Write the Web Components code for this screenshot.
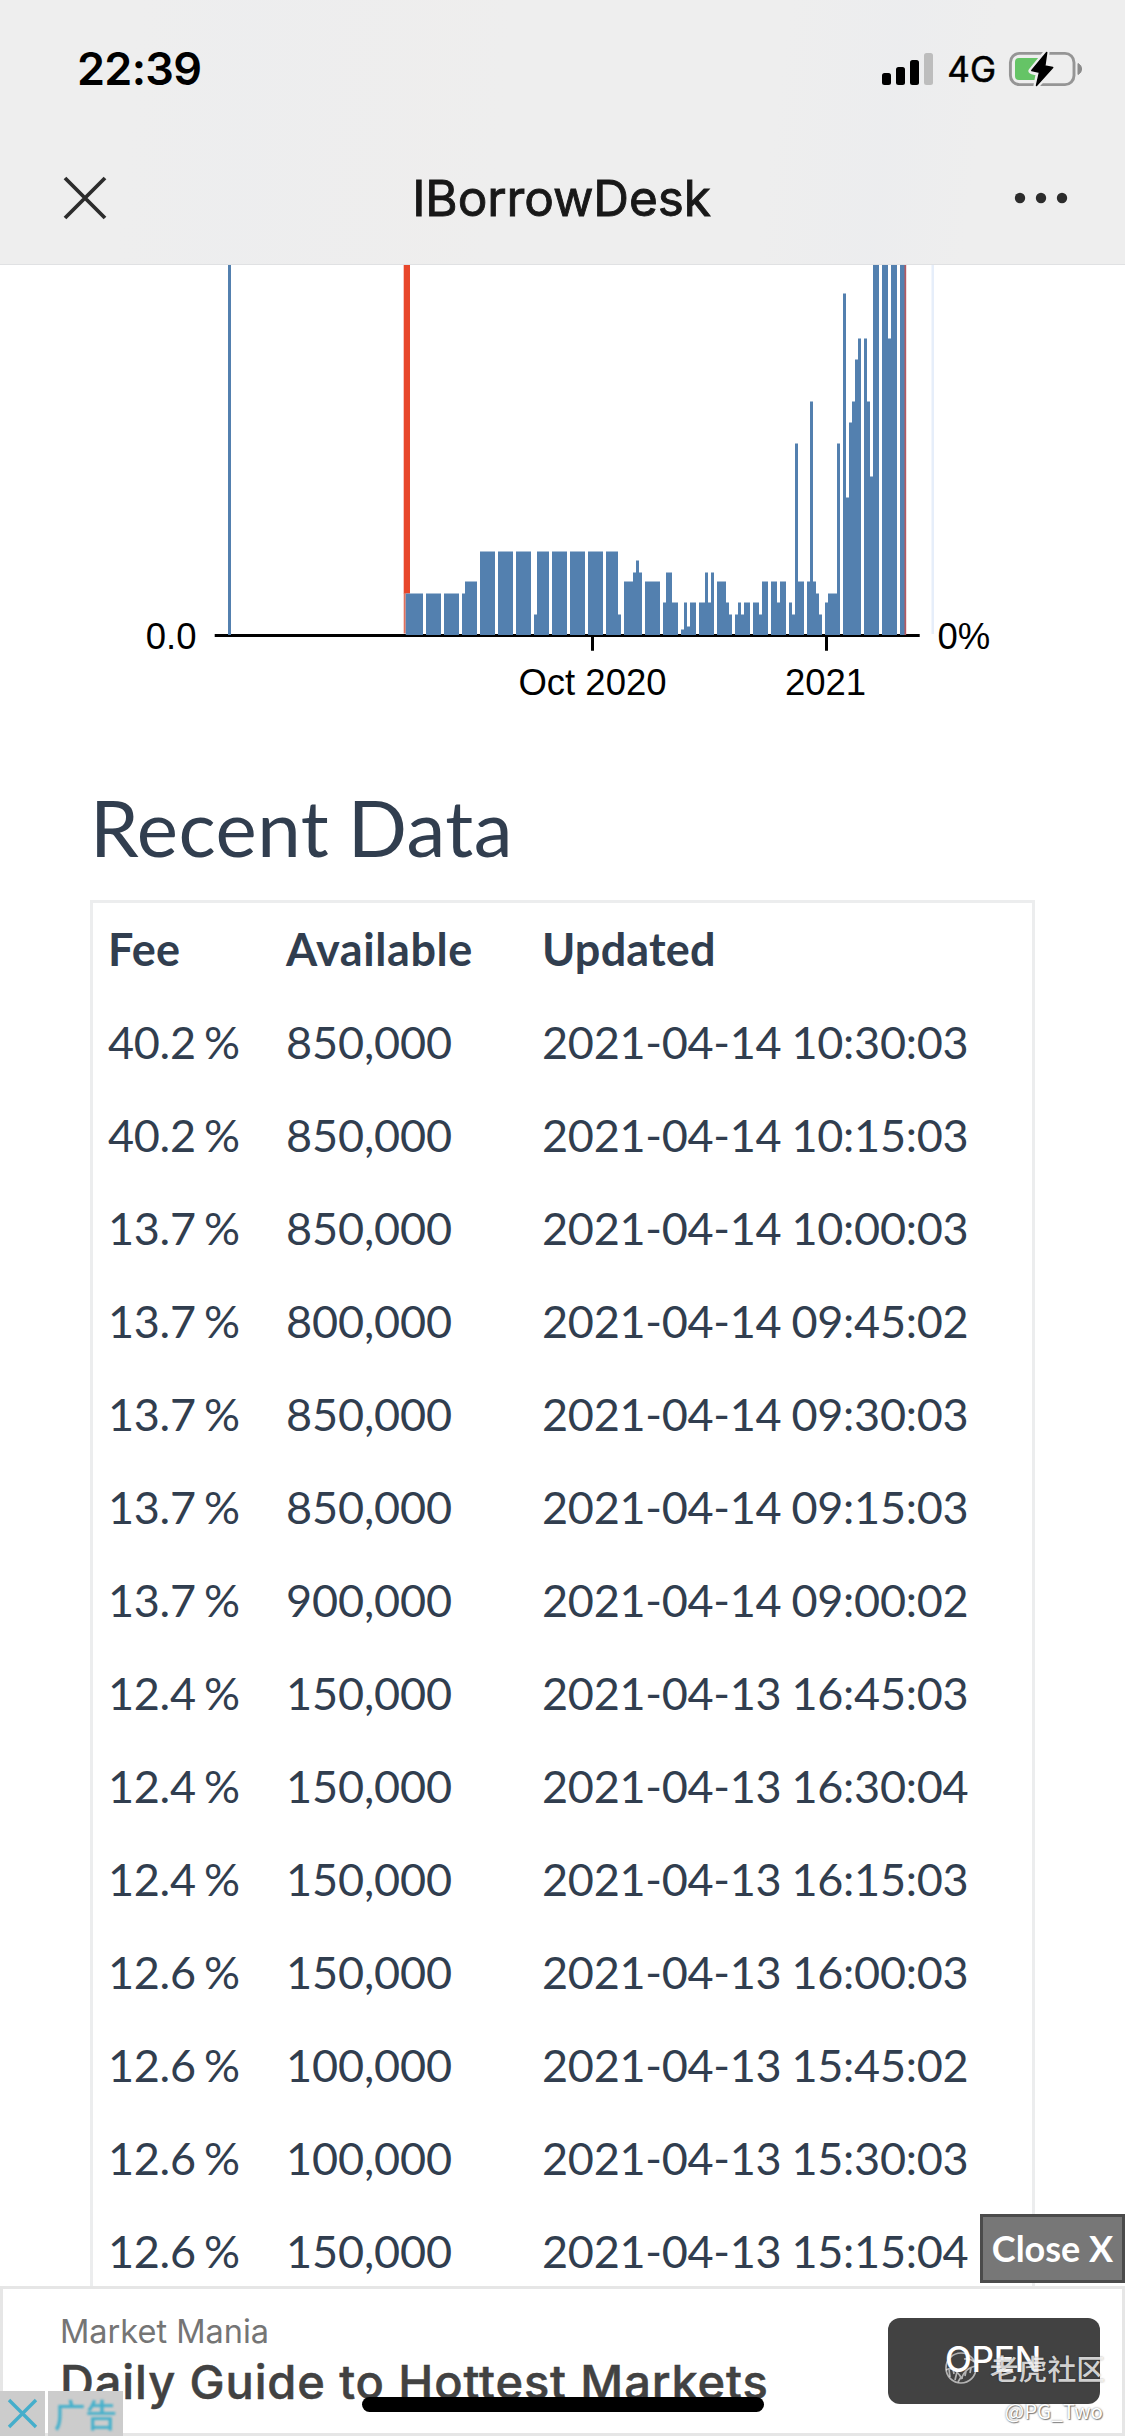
<!DOCTYPE html>
<html lang="en">
<head>
<meta charset="utf-8">
<title>IBorrowDesk</title>
<style>
html,body{margin:0;padding:0;background:#fff}
body{width:1125px;height:2436px;overflow:hidden}
</style>
</head>
<body>
<borrow-app></borrow-app>
<script>
function define(name, html, setup){
  const t = document.createElement('template');
  t.innerHTML = html;
  customElements.define(name, class extends HTMLElement{
    constructor(){
      super();
      this.attachShadow({mode:'open'}).append(t.content.cloneNode(true));
    }
    connectedCallback(){ if(setup) setup(this, this.shadowRoot); }
  });
}

define('status-bar', `
<style>
:host{display:flex;height:132px;padding:6px 42px 0 77px;box-sizing:border-box;align-items:center;justify-content:space-between;font-family:Inter,sans-serif;color:#000}
.time{font-size:45px;font-weight:600;line-height:54px;letter-spacing:-.7px}
.right{display:flex;align-items:center}
.net{font-size:35px;font-weight:400;line-height:40px;margin:0 12px 0 13px;-webkit-text-stroke:.5px #000}
svg{display:block}
</style>
<span class="time">22:39</span>
<div class="right">
<svg width="52" height="34" viewBox="882 52 52 34"><g><rect x="882" y="73" width="9" height="12" rx="2.5"/><rect x="896" y="67" width="9" height="18" rx="2.5"/><rect x="910" y="60" width="9" height="25" rx="2.5"/><rect x="924" y="53" width="9" height="32" rx="2.5" fill="#bdbdbd"/></g></svg>
<span class="net">4G</span>
<svg width="75" height="38" viewBox="1008 50 75 38"><rect x="1010.4" y="53.4" width="63.6" height="31.2" rx="9" fill="none" stroke="#959595" stroke-width="2.9"/><path d="M1078 63.5a6 6 0 0 1 0 11z" fill="#8b8b8b" stroke="#8b8b8b"/><path d="M1019 58h20v22h-20a4 4 0 0 1-4-4V62a4 4 0 0 1 4-4z" fill="#65c466"/><path d="M1046.500 52.500 1031.500 71 1038.800 73 1036.500 85.500 1053 67.500 1045 65.500z" stroke="#eee" stroke-width="6" stroke-linejoin="round" fill="#eee"/><path d="M1046.700 52.500 1031.800 70.600 1039.500 72.300 1036.500 85.400 1052.700 67.500 1044.800 66z" stroke="#000" stroke-width="1.500" stroke-linejoin="round"/></svg>
</div>`);

define('nav-bar', `
<style>
:host{display:grid;grid-template-columns:1fr auto 1fr;align-items:center;height:132px;padding:0 64px 0 63px;box-sizing:border-box;font-family:Inter,sans-serif;color:#181818}
.title{font-size:49.500px;font-weight:400;line-height:60px;-webkit-text-stroke:.9px #181818;letter-spacing:-.1px;margin-right:1px}
.more{justify-self:end;margin-right:-7px}
svg{display:block}
</style>
<svg width="44" height="44" viewBox="0 0 44 44"><path d="M2 2 42 42M42 2 2 42" stroke="#2c2c2c" stroke-width="3.800"/></svg>
<span class="title"><slot></slot></span>
<svg class="more" width="54" height="12" viewBox="0 0 54 12" fill="#2c2c2c"><circle cx="6" cy="6" r="5.200"/><circle cx="27" cy="6" r="5.200"/><circle cx="48" cy="6" r="5.200"/></svg>`);

define('app-header', `
<style>
:host{display:block;flex:none;height:265px;box-sizing:border-box;border-bottom:1px solid #e0e1e3;background:linear-gradient(98deg,transparent 68%,rgba(228,232,241,.18) 78%,transparent 86%),linear-gradient(95deg,transparent 12%,rgba(232,235,242,.15) 22%,rgba(240,236,234,.15) 38%,transparent 45%),#eee}
</style>
<slot></slot>`);

// x start, x end, top edge of each availability bar
const BARS = [
[228,231,0],[405.700,423,593.500],[426,441,593.500],[444,459,593.500],[462,465,593.500],[465,477,581.500],[480,495,551.500],[498,513,551.500],[516,531,551.500],[534,537,614.500],[537,549,551.500],[552,567,551.500],[570,585,551.500],[588,603,551.500],[606,618,551.500],[618,621,614.500],
[624,633,581.500],[633,636,572.500],[636,639,560.500],[639,642,572.500],[645,660,581.500],[663,666,602.500],[666,672,572.500],[672,678,602.500],
[681,684,629.500],[684,687,602.500],[687,690,626.500],[690,696,602.500],[699,705,602.500],[705,708,572.500],[708,711,602.500],[711,714,572.500],
[717,726,581.500],[726,729,602.500],[729,732,614.500],[735,738,614.500],[738,741,602.500],[741,744,614.500],[744,750,602.500],[753,759,602.500],[759,762,614.500],[762,768,581.500],
[771,777,581.500],[777,780,602.500],[780,786,581.500],[789,792,602.500],[792,795,614.500],[795,798,443.500],[798,804,581.500],[807,810,581.500],[810,813,401.500],[813,816,581.500],[816,819,593.500],[819,822,614.500],
[825,828,602.500],[828,837,593.500],[837,840,443.500],[843,846,293.500],[846,849,497.500],[849,852,422.500],[852,855,401.500],[855,858,359.500],[858,861,338.500],
[864,867,338.500],[867,870,401.500],[870,873,476.500],[873,879,0],[882,888,0],[888,891,338.500],[891,897,0],[900,905,0]];

define('availability-chart', `
<style>
:host{display:block;height:495px}
svg{display:block}
text{font-family:"Liberation Sans",Arial,sans-serif;font-size:36.500px;fill:#000}
</style>
<svg width="1125" height="495" viewBox="0 265 1125 495">
<rect x="931.500" y="265" width="2.500" height="369" fill="#e6eefa"/>
<path d="M214.700 634H919.700V637H828V650.700H825V637H594V650.700H591V637H214.700z"/>
<rect x="403.700" y="265" width="6.300" height="328.500" fill="#e8472b"/>
<rect x="403.700" y="593" width="2" height="40.500" fill="#e2705c"/>
<g fill="#5380af"></g>
<rect x="904.500" y="265" width="1.700" height="370" fill="#b5585f"/>
<text x="196.500" y="648.500" text-anchor="end">0.0</text>
<text x="937.500" y="648.500">0%</text>
<text x="592.500" y="695" text-anchor="middle">Oct 2020</text>
<text x="825.500" y="695" text-anchor="middle">2021</text>
</svg>`, (el, root) => {
  const g = root.querySelector('g');
  if (g.childNodes.length) return;
  for (const [a,b,top] of BARS){
    const y = top || 265;
    const r = document.createElementNS('http://www.w3.org/2000/svg','rect');
    r.setAttribute('x',a); r.setAttribute('width',b-a);
    r.setAttribute('y',y); r.setAttribute('height',635-y);
    g.append(r);
  }
});

define('data-row', `
<style>
:host{display:grid;grid-template-columns:178px 256px 1fr;padding:15px 0 15px 15px;line-height:63px;white-space:pre}
::slotted(:nth-child(1)){letter-spacing:-.3px;word-spacing:-3px}
::slotted(:nth-child(2)){letter-spacing:-.1px}
::slotted(:nth-child(3)){letter-spacing:-.28px;word-spacing:-1.200px}
:host([head]){font-weight:700}
:host([head]) ::slotted(*){letter-spacing:.2px}
:host([head]) ::slotted(:nth-child(2)){letter-spacing:.6px}
</style>
<slot></slot>`);

define('recent-data', `
<style>
:host{display:block;padding:0 90px;color:#313e4f;font-family:Lato,sans-serif}
h1{margin:0;font-size:78px;font-weight:400;line-height:86px;height:140px;padding-top:24px;box-sizing:border-box;letter-spacing:.5px;word-spacing:-2px}
.table{box-sizing:border-box;width:945px;border:3px solid #ecedee;font-size:45px;height:1500px}
</style>
<h1>Recent Data</h1>
<div class="table"></div>`, (el, root) => {
  const table = root.querySelector('.table');
  if (table.childNodes.length) return;
  const rows = [
    ['Fee','Available','Updated'],
    ['40.2 %','850,000','2021-04-14 10:30:03'],
    ['40.2 %','850,000','2021-04-14 10:15:03'],
    ['13.7 %','850,000','2021-04-14 10:00:03'],
    ['13.7 %','800,000','2021-04-14 09:45:02'],
    ['13.7 %','850,000','2021-04-14 09:30:03'],
    ['13.7 %','850,000','2021-04-14 09:15:03'],
    ['13.7 %','900,000','2021-04-14 09:00:02'],
    ['12.4 %','150,000','2021-04-13 16:45:03'],
    ['12.4 %','150,000','2021-04-13 16:30:04'],
    ['12.4 %','150,000','2021-04-13 16:15:03'],
    ['12.6 %','150,000','2021-04-13 16:00:03'],
    ['12.6 %','100,000','2021-04-13 15:45:02'],
    ['12.6 %','100,000','2021-04-13 15:30:03'],
    ['12.6 %','150,000','2021-04-13 15:15:04']];
  rows.forEach((cells, i) => {
    const row = document.createElement('data-row');
    if (!i) row.setAttribute('head','');
    for (const c of cells){ const s = document.createElement('span'); s.textContent = c; row.append(s); }
    table.append(row);
  });
});

define('close-tab', `
<style>
:host{position:absolute;right:0;bottom:153px;width:145px;height:69px;box-sizing:border-box;border:3px solid #4b4b4b;background:#777;color:#fff;font:700 36px/63px Lato,sans-serif;text-align:center;white-space:nowrap}
</style><slot></slot>`);

define('ad-banner', `
<style>
:host{display:flex;flex:none;position:relative;height:150px;box-sizing:border-box;border:3px solid #e6e6e6;background:#fff;justify-content:space-between;align-items:flex-start;padding:29px 22px 0 57px;font-family:Inter,sans-serif}
.copy{display:flex;flex-direction:column;white-space:nowrap}
.brand{font-size:32.500px;line-height:28px;color:#757575}
.head{font-size:47px;line-height:56px;font-weight:500;color:#424242;margin-top:8px;letter-spacing:.88px;-webkit-text-stroke:.5px #424242}
.open{width:212px;height:86px;border-radius:12px;background:#424242;color:#fff;font-size:35px;font-weight:500;line-height:83px;text-align:center;box-sizing:border-box;letter-spacing:-.2px;padding-right:2px}
.badges{position:absolute;left:-3px;bottom:-3px;display:flex;gap:3px;height:45px}
.badges>*{background:#ccc;height:45px;display:block}
.label{width:75px;text-align:center;font:500 31.500px/44px "Noto Sans CJK SC",sans-serif;color:#45b0cb}
.label span{filter:blur(1.100px);display:block}
</style>
<div class="copy"><span class="brand">Market Mania</span><span class="head">Daily Guide to Hottest Markets</span></div>
<div class="open">OPEN</div>
<div class="badges"><svg width="45" height="45" viewBox="0 0 45 45"><path d="M9 9 36 36M36 9 9 36" stroke="#45aecb" stroke-width="3.400"/></svg><div class="label"><span>广告</span></div></div>`);

define('home-indicator', `
<style>:host{position:absolute;left:362px;bottom:24px;width:402px;height:15px;border-radius:8px;background:#000}</style>`);

define('community-mark', `
<style>
:host{position:absolute;right:22px;bottom:9px;display:flex;flex-direction:column;align-items:flex-end;font-family:"Noto Sans CJK SC",sans-serif;color:rgba(255,255,255,.8);white-space:nowrap}
.top{display:flex;align-items:center;gap:12px;font-size:28.800px;line-height:40px;font-weight:500;text-shadow:0 0 2px rgba(0,0,0,.4);margin:0 -2px 5px 0}
.user{font-size:20.500px;line-height:34px;color:#fff;text-shadow:0 0 2px rgba(0,0,0,.5),1px 1px 1px rgba(0,0,0,.45)}
svg{display:block}
</style>
<div class="top"><svg width="34" height="34" viewBox="0 0 34 34" fill="none" stroke="rgba(255,255,255,.6)" stroke-width="1.700"><circle cx="17" cy="17" r="15"/><path d="M2 19q6-3 10 1t6 8M5 18l1 8M9 18l1 5M13 21l-2 8M17 26l-3 5M32 15q-6 1-10 5t-4 8M27 17l-1 5M22 20l-1 5M20 8q7-1 10 3" /></svg><span>老虎社区</span></div>
<span class="user">@PG_Two</span>`);

define('borrow-app', `
<style>
:host{display:flex;flex-direction:column;position:relative;width:1125px;height:2436px;overflow:hidden;background:#fff}
main{flex:1;min-height:0;overflow:hidden}
</style>
<app-header><status-bar></status-bar><nav-bar>IBorrowDesk</nav-bar></app-header>
<main><availability-chart></availability-chart><recent-data></recent-data></main>
<ad-banner></ad-banner>
<close-tab>Close X</close-tab>
<home-indicator></home-indicator>
<community-mark></community-mark>`);
</script>
</body>
</html>
